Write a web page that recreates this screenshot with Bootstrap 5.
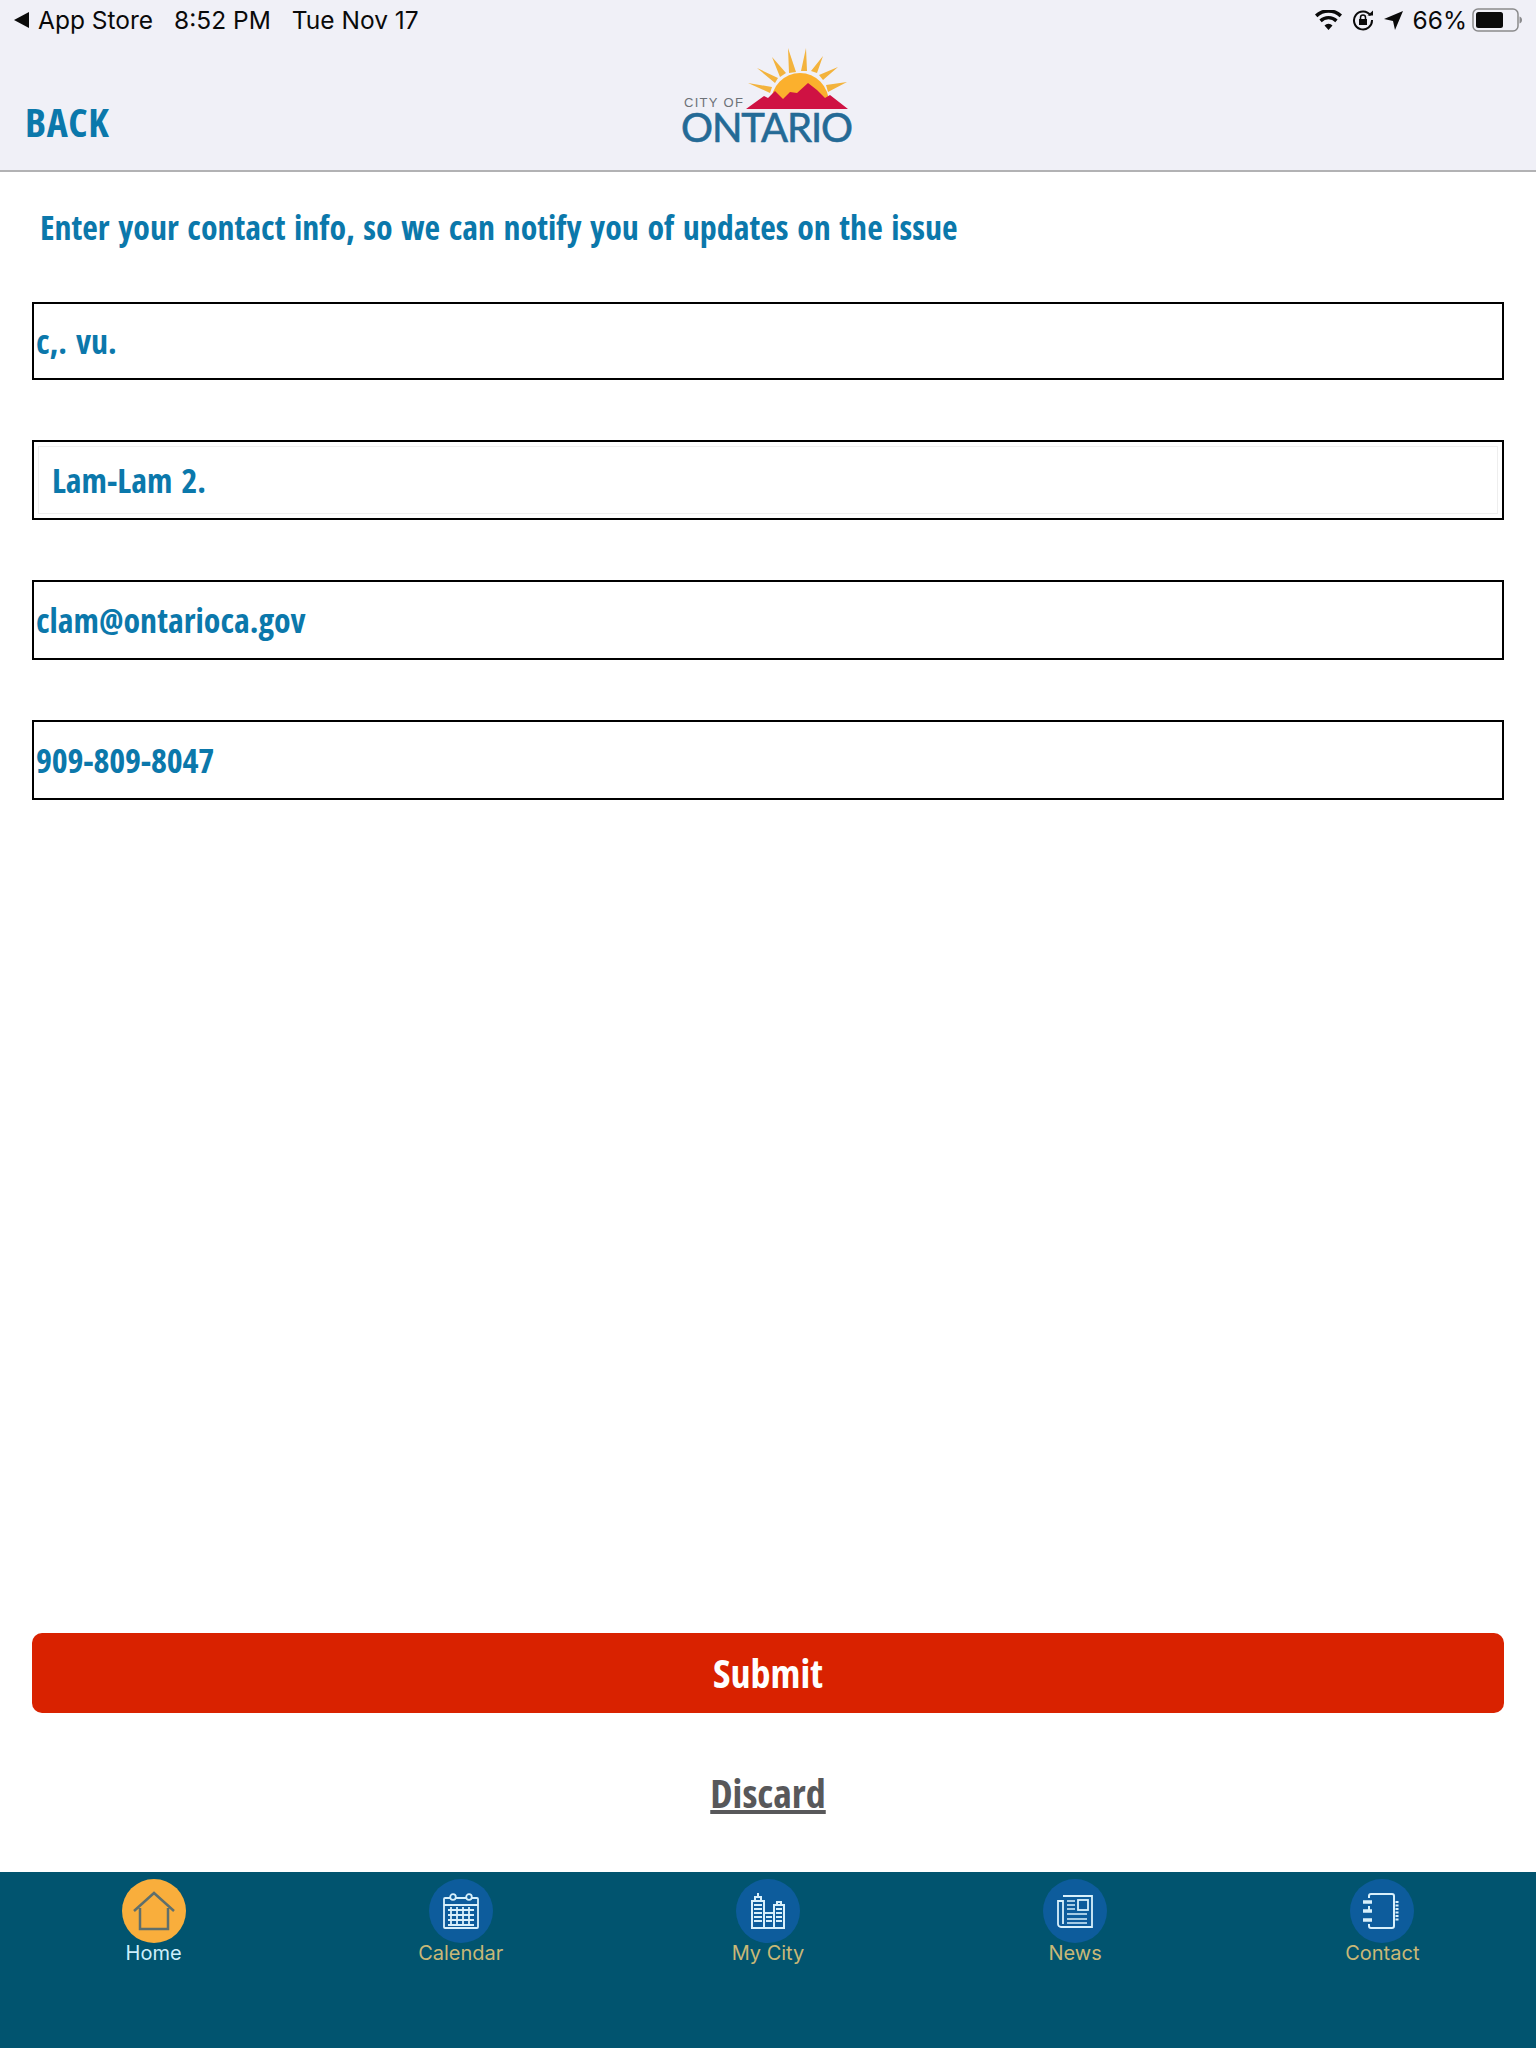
<!DOCTYPE html>
<html lang="en">
<head>
    <meta charset="UTF-8">
    <meta name="viewport" content="width=device-width, initial-scale=1.0">
    <title>City of Ontario - Contact Info</title>
    <link rel="stylesheet" href="https://cdn.jsdelivr.net/npm/bootstrap@5.3.0/dist/css/bootstrap.min.css">
    <style>
        body { background: #fff; font-family: "Open Sans", sans-serif; }
        .app-page { width: 1536px; height: 2048px; overflow: hidden; }

        .app-header { background: #f0f0f7; height: 172px; border-bottom: 2px solid #b2b2b4; }
        .status-bar { height: 40px; padding: 0 14px; font-family: Inter, "Liberation Sans", sans-serif; font-size: 24.5px; color: #0a0a0a; }
        .status-left { gap: 21px; }
        .status-right { gap: 10px; }
        .battery-icon { margin-left: -5px; }
        .back-arrow { width: 15px; height: 16px; margin-right: 9px; }
        .header-row { display: grid; grid-template-columns: 1fr 180px 1fr; }
        .back-link { font-size: 40px; font-weight: 700; color: #0b78ab; text-decoration: none; padding: 57px 0 0 25px; line-height: 50px; letter-spacing: .6px; }
        .cond { font-family: "Open Sans", sans-serif; font-stretch: 75%; word-spacing: 3px; }

        .form-area { padding: 0 32px; }
        .form-title { font-size: 34px; font-weight: 700; color: #0b78ab; margin: 32px 0 0 8px; line-height: 46px; word-spacing: 2.5px; }
        .field-stack { margin-top: 52px; gap: 60px; }
        .field-box { height: 80px; border: 2px solid #000; }
        .field-box.first-field { height: 78px; }
        .field-box .form-control { height: 100%; border: 0; border-radius: 0; padding: 0 0 0 2px; font-size: 34px; font-weight: 700; color: #0b78ab; background: transparent; box-shadow: none; }
        .field-box.inset { padding: 4px; }
        .field-box.inset .form-control { border: 1px solid #eee; padding-left: 13px; }
        .field-box .phone-value { letter-spacing: -.2px; }

        .action-stack { padding-bottom: 53px; }
        .btn-submit { height: 80px; width: 100%; background: #d92200; color: #fff; border: 0; border-radius: 10px; font-size: 40px; font-weight: 700; line-height: 1; }
        .btn-submit:hover { background: #d92200; color: #fff; }
        .discard-link { font-size: 40px; font-weight: 700; color: #58585a; line-height: 52px; margin-top: 54px; }
        .discard-link:hover { color: #58585a; }

        .tab-bar { height: 176px; background: #01546f; margin-top: auto; padding-top: 7px; font-family: Inter, "Liberation Sans", sans-serif; }
        .tab-item { width: 20%; color: #c9b877; font-size: 20px; line-height: 24px; text-decoration: none; }
        .tab-item.active { color: #cdeefb; }
        .tab-circle { width: 64px; height: 64px; border-radius: 50%; background: #0d5c9c; margin-bottom: -2px; }
        .tab-item.active .tab-circle { background: #f9ae3c; }
    </style>
</head>
<body>
    <div class="app-page d-flex flex-column">
        <header class="app-header">
            <div class="status-bar d-flex justify-content-between align-items-center">
                <div class="status-left d-flex align-items-center">
                    <span class="d-flex align-items-center">
                        <svg class="back-arrow" viewBox="0 0 15 16"><path d="M15 0V16L0 8Z" fill="#0a0a0a"/></svg>
                        App Store
                    </span>
                    <span>8:52 PM</span>
                    <span>Tue Nov 17</span>
                </div>
                <div class="status-right d-flex align-items-center">
                    <svg width="27" height="20" viewBox="0 0 27 20"><path d="M13.5 20l-4-4.6a5.6 5.6 0 0 1 8 0zM6.7 12.2L4.4 9.6a13 13 0 0 1 18.2 0l-2.3 2.6a9.5 9.5 0 0 0-13.6 0zM2.4 7.3L0 4.6a19.5 19.5 0 0 1 27 0l-2.400 2.700a16 16 0 0 0-22.200 0z" fill="#0a0a0a"/></svg>
                    <svg width="22" height="22" viewBox="0 0 22 22"><path d="M18.500 6.500A9 9 0 1 0 20 11" fill="none" stroke="#0a0a0a" stroke-width="2"/><path d="M15.500 6.500h5.500v-5z" fill="#0a0a0a"/><rect x="7" y="10" width="8" height="6" fill="#0a0a0a"/><path d="M8.500 10V8.500a2.500 2.500 0 0 1 5 0V10" fill="none" stroke="#0a0a0a" stroke-width="1.500"/></svg>
                    <svg width="19" height="19" viewBox="0 0 19 19"><path d="M19 0L11 19 9 10 0 8Z" fill="#0a0a0a"/></svg>
                    <span>66%</span>
                    <svg class="battery-icon" width="50" height="24" viewBox="0 0 50 24"><rect x="1" y="1" width="45" height="22" rx="5" fill="none" stroke="#8a8a8c" stroke-width="1.500"/><rect x="4" y="4" width="27" height="16" rx="2.500" fill="#0a0a0a"/><path d="M47.500 8.500c1.500.4 2.500 1.800 2.500 3.500s-1 3.100-2.500 3.500z" fill="#8a8a8c"/></svg>
                </div>
            </div>
            <div class="header-row">
                <a class="back-link cond" href="#">BACK</a>
                <svg width="180" height="110" viewBox="678 40 180 110">
                    <path fill="#f3b33d" d="M748 83l24 4-2 6zM757 68l21 10-3 5zM772 57l14 16-6 4zM788 48l8 24-7 1zM806 48l1 23h-6zM823 56l-6 17-6-2zM838 67l-15 13-4-5zM847 82l-19 10-2-7z"/>
                    <path d="M771 103a29 30 0 0 1 58 0v6h-58z" fill="#fbb02d"/>
                    <path d="M746 109l18-13 4 2 7-7 8 8 7-7 7 1 11-10 9 7 8 8 5-3 18 14z" fill="#cf1243"/>
                    <text x="684" y="107" font-family="Liberation Sans, sans-serif" font-size="13" letter-spacing="1.300" fill="#6d7278">CITY OF</text>
                    <text x="681" y="142" font-family="Lato, sans-serif" font-size="40" textLength="172" lengthAdjust="spacing" stroke="#246a96" stroke-width=".6" fill="#246a96">ONTARIO</text>
                </svg>
                <div></div>
            </div>
        </header>

        <main class="form-area d-flex flex-column flex-grow-1">
            <h1 class="form-title cond">Enter your contact info, so we can notify you of updates on the issue</h1>
            <div class="field-stack d-flex flex-column">
                <div class="field-box first-field"><input class="form-control cond" type="text" value="c,. vu." aria-label="First name"></div>
                <div class="field-box inset"><input class="form-control cond" type="text" value="Lam-Lam 2." aria-label="Last name"></div>
                <div class="field-box"><input class="form-control cond" type="text" value="clam@ontarioca.gov" aria-label="Email"></div>
                <div class="field-box"><input class="form-control cond phone-value" type="text" value="909-809-8047" aria-label="Phone"></div>
            </div>
            <div class="action-stack mt-auto d-flex flex-column align-items-center">
                <button class="btn btn-submit cond" type="button">Submit</button>
                <a class="discard-link cond" href="#">Discard</a>
            </div>
        </main>

        <nav class="tab-bar d-flex">
            <a class="tab-item active d-flex flex-column align-items-center" href="#">
                <span class="tab-circle d-flex align-items-center justify-content-center">
                    <svg width="42" height="40" viewBox="0 0 42 40" fill="none" stroke="#5f6f6c" stroke-width="2.500"><path d="M1 20L21 2l20 18M7 17v21h28V17"/></svg>
                </span>
                Home
            </a>
            <a class="tab-item d-flex flex-column align-items-center" href="#">
                <span class="tab-circle d-flex align-items-center justify-content-center">
                    <svg width="36" height="36" viewBox="0 0 36 36" fill="none" stroke="#d8f0fb" stroke-width="1.800"><rect x="1" y="5" width="34" height="30" rx="1"/><path d="M1 12h34M5 17h26M5 22h26M5 27h26M5 32h26M8 14v19M14 14v19M20 14v19M26 14v19"/><circle cx="10" cy="4" r="2.800" fill="#0d5c9c"/><circle cx="26" cy="4" r="2.800" fill="#0d5c9c"/></svg>
                </span>
                Calendar
            </a>
            <a class="tab-item d-flex flex-column align-items-center" href="#">
                <span class="tab-circle d-flex align-items-center justify-content-center">
                    <svg width="36" height="36" viewBox="0 0 36 36" fill="none" stroke="#d8f0fb" stroke-width="2"><path d="M2 35V8h12v27M5 8V4h6v4M8 4V0M14 35V20h10v15M24 35V12h10v23M27 12V9h4v3M1 35h34"/><path d="M4 12h8M4 16h8M4 20h8M4 24h8M4 28h8M16 24h6M16 28h6M26 16h6M26 20h6M26 24h6M26 28h6" stroke-width="2.200"/></svg>
                </span>
                My City
            </a>
            <a class="tab-item d-flex flex-column align-items-center" href="#">
                <span class="tab-circle d-flex align-items-center justify-content-center">
                    <svg width="36" height="36" viewBox="0 0 36 36" fill="none" stroke="#d8f0fb" stroke-width="1.800"><path d="M6 3h29v31H4a3 3 0 0 1-3-3V8h5v23"/><path d="M10 8h8M10 12h8M10 16h8M10 21h20M10 26h20M10 30h20" stroke-width="1.600"/><rect x="21" y="7" width="10" height="10"/></svg>
                </span>
                News
            </a>
            <a class="tab-item d-flex flex-column align-items-center" href="#">
                <span class="tab-circle d-flex align-items-center justify-content-center">
                    <svg width="38" height="36" viewBox="0 0 38 36" fill="none" stroke="#d8f0fb" stroke-width="2"><path d="M6 5V3a2 2 0 0 1 2-2h21a2 2 0 0 1 2 2v30a2 2 0 0 1-2 2H8a2 2 0 0 1-2-2v-2M6 13v6"/><path d="M0 9h9M0 18h9M0 27h9" stroke-width="3.500"/><path d="M34 8v20" stroke-width="3" stroke-dasharray="2 1.500"/></svg>
                </span>
                Contact
            </a>
        </nav>
    </div>
    <script src="https://cdn.jsdelivr.net/npm/bootstrap@5.3.0/dist/js/bootstrap.bundle.min.js"></script>
</body>
</html>
